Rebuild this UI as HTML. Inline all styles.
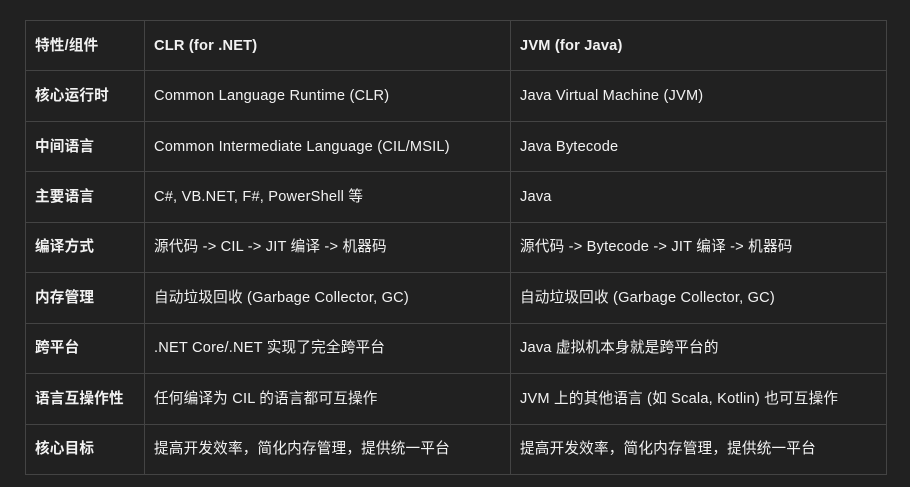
<!DOCTYPE html>
<html><head><meta charset="utf-8"><style>
body{margin:0;background:#212121;width:910px;height:487px;overflow:hidden;font-family:"Liberation Sans","Noto Sans CJK SC",sans-serif;color:#f2f2f2;font-size:14.6px;letter-spacing:0.2px}
table{position:absolute;left:25px;top:20px;border-collapse:collapse;width:862px;table-layout:fixed}
tr{height:50.44px}
td{border:1px solid #444;padding:0 0 0 9px;vertical-align:middle;white-space:nowrap;line-height:20px}
td:first-child{font-weight:bold;width:109px}
td:nth-child(2){width:356px}
tr:first-child td{font-weight:bold}
</style></head><body>
<table>
<tr><td>特性/组件</td><td>CLR (for .NET)</td><td>JVM (for Java)</td></tr>
<tr><td>核心运行时</td><td>Common Language Runtime (CLR)</td><td>Java Virtual Machine (JVM)</td></tr>
<tr><td>中间语言</td><td>Common Intermediate Language (CIL/MSIL)</td><td>Java Bytecode</td></tr>
<tr><td>主要语言</td><td>C#, VB.NET, F#, PowerShell 等</td><td>Java</td></tr>
<tr><td>编译方式</td><td>源代码 -&gt; CIL -&gt; JIT 编译 -&gt; 机器码</td><td>源代码 -&gt; Bytecode -&gt; JIT 编译 -&gt; 机器码</td></tr>
<tr><td>内存管理</td><td>自动垃圾回收 (Garbage Collector, GC)</td><td>自动垃圾回收 (Garbage Collector, GC)</td></tr>
<tr><td>跨平台</td><td>.NET Core/.NET 实现了完全跨平台</td><td>Java 虚拟机本身就是跨平台的</td></tr>
<tr><td>语言互操作性</td><td>任何编译为 CIL 的语言都可互操作</td><td>JVM 上的其他语言 (如 Scala, Kotlin) 也可互操作</td></tr>
<tr><td>核心目标</td><td>提高开发效率，简化内存管理，提供统一平台</td><td>提高开发效率，简化内存管理，提供统一平台</td></tr>
</table>
</body></html>
